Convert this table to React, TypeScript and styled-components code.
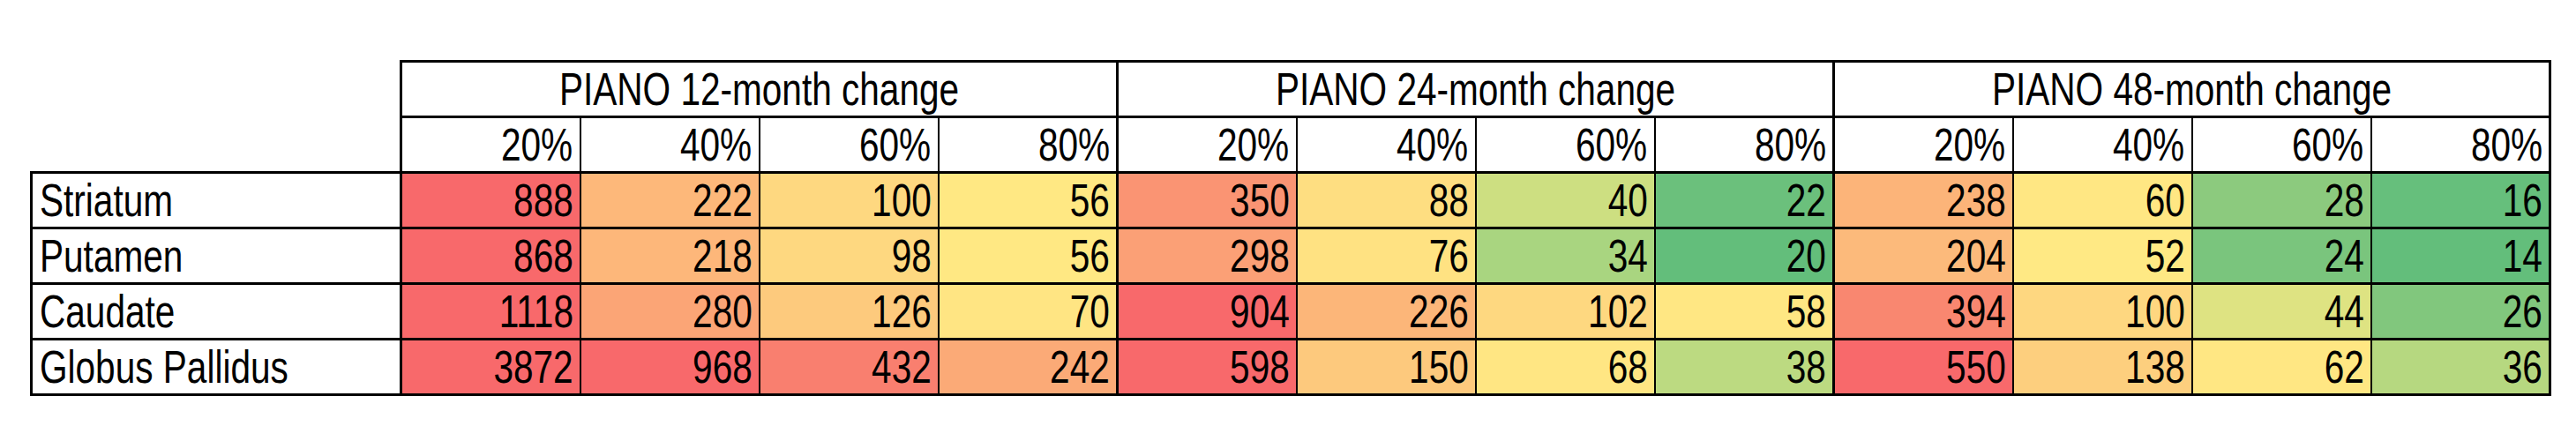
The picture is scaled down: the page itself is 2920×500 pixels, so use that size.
import React from 'react';
import styled, { createGlobalStyle } from 'styled-components';

const GlobalStyle = createGlobalStyle`
    html, body {
        margin: 0;
        padding: 0;
        background: #ffffff;
    }
`;

const Page = styled.div`
    padding: 68px 0 0 34px;
    font-family: 'Liberation Sans', Arial, sans-serif;
    color: #000000;
`;

const Table = styled.table`
    border-collapse: collapse;
    table-layout: fixed;
    font-size: 52px;
    line-height: 1;
`;

const Row = styled.tr`
    height: 63px;
`;

const Corner = styled.td`
    border: none;
    padding: 0;
`;

// narrow face: the sheet uses a condensed font, so squeeze the text horizontally
const Txt = styled.span<{ $origin: string }>`
    display: inline-block;
    white-space: nowrap;
    transform: scaleX(0.78);
    transform-origin: ${(p) => p.$origin} center;
`;

const GroupHead = styled.th`
    border: 3px solid #000;
    font-weight: 400;
    text-align: center;
    vertical-align: middle;
    padding: 0;
`;

type EdgeProps = { $first: boolean; $last: boolean };

const PctHead = styled.th<EdgeProps>`
    border-top: 3px solid #000;
    border-bottom: 3px solid #000;
    border-left: ${(p) => (p.$first ? '3px' : '2px')} solid #000;
    border-right: ${(p) => (p.$last ? '3px' : '2px')} solid #000;
    font-weight: 400;
    text-align: right;
    vertical-align: middle;
    padding: 0 7px 0 0;
`;

const Label = styled.td`
    border: 3px solid #000;
    text-align: left;
    vertical-align: middle;
    padding: 0 0 0 8px;
`;

const Cell = styled.td<EdgeProps & { $bg: string }>`
    background: ${(p) => p.$bg};
    border-top: 3px solid #000;
    border-bottom: 3px solid #000;
    border-left: ${(p) => (p.$first ? '3px' : '2px')} solid #000;
    border-right: ${(p) => (p.$last ? '3px' : '2px')} solid #000;
    text-align: right;
    vertical-align: middle;
    padding: 0 7px 0 0;
`;

const groups = ['PIANO 12-month change', 'PIANO 24-month change', 'PIANO 48-month change'];
const pcts = ['20%', '40%', '60%', '80%'];

type Datum = [number, string];

const rows: { name: string; cells: Datum[] }[] = [
    {
        name: 'Striatum',
        cells: [
            [888, '#F8696B'], [222, '#FDB87A'], [100, '#FED880'], [56, '#FFE883'],
            [350, '#FA9473'], [88, '#FEDE81'], [40, '#CDDF81'], [22, '#6BC07C'],
            [238, '#FCB479'], [60, '#FFE783'], [28, '#8CCA7E'], [16, '#66BF7C'],
        ],
    },
    {
        name: 'Putamen',
        cells: [
            [868, '#F8696B'], [218, '#FDB77A'], [98, '#FED880'], [56, '#FFE883'],
            [298, '#FBA076'], [76, '#FFE282'], [34, '#A9D580'], [20, '#63BE7B'],
            [204, '#FCBA7B'], [52, '#FFE984'], [24, '#7AC57D'], [14, '#63BE7B'],
        ],
    },
    {
        name: 'Caudate',
        cells: [
            [1118, '#F8696B'], [280, '#FBA576'], [126, '#FDCA7D'], [70, '#FFE583'],
            [904, '#F8696B'], [226, '#FCB679'], [102, '#FED880'], [58, '#FFE783'],
            [394, '#F98770'], [100, '#FED780'], [44, '#DEE382'], [26, '#81C77D'],
        ],
    },
    {
        name: 'Globus Pallidus',
        cells: [
            [3872, '#F8696B'], [968, '#F8696B'], [432, '#F97F6F'], [242, '#FBAA77'],
            [598, '#F8696B'], [150, '#FDC97D'], [68, '#FFE683'], [38, '#BCDA81'],
            [550, '#F8696B'], [138, '#FDCF7E'], [62, '#FFE783'], [36, '#B6D880'],
        ],
    },
];

const App = (): JSX.Element => (
    <Page>
        <GlobalStyle />
        <Table>
            <colgroup>
                <col style={{ width: 419 }} />
                {Array.from({ length: 12 }, (_, i) => (
                    <col key={i} style={{ width: 203 }} />
                ))}
            </colgroup>
            <thead>
                <Row>
                    <Corner rowSpan={2} />
                    {groups.map((g) => (
                        <GroupHead key={g} colSpan={4}>
                            <Txt $origin="center">{g}</Txt>
                        </GroupHead>
                    ))}
                </Row>
                <Row>
                    {groups.map((g) =>
                        pcts.map((p, i) => (
                            <PctHead key={g + p} $first={i === 0} $last={i === 3}>
                                <Txt $origin="right">{p}</Txt>
                            </PctHead>
                        ))
                    )}
                </Row>
            </thead>
            <tbody>
                {rows.map((r) => (
                    <Row key={r.name}>
                        <Label>
                            <Txt $origin="left">{r.name}</Txt>
                        </Label>
                        {r.cells.map(([v, bg], i) => (
                            <Cell key={i} $bg={bg} $first={i % 4 === 0} $last={i % 4 === 3}>
                                <Txt $origin="right">{v}</Txt>
                            </Cell>
                        ))}
                    </Row>
                ))}
            </tbody>
        </Table>
    </Page>
);

export default App;
